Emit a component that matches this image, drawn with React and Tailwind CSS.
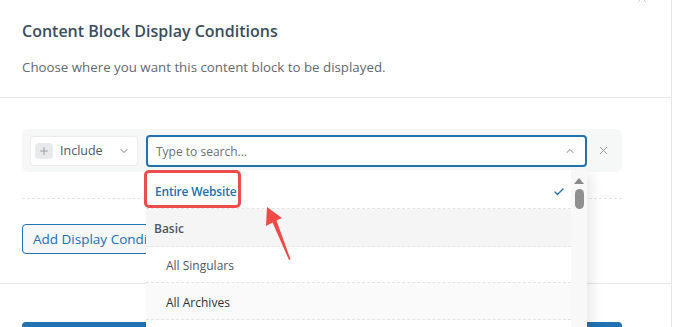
import { Plus, ChevronDown, ChevronUp, X, Check } from 'lucide-react';

function ConditionRow() {
  return (
    <div className="flex items-center w-[600px] h-[43px] bg-[#f6f7f7] rounded-md pl-2 pr-3">
      <div className="flex items-center w-[108px] h-[30px] bg-white border border-[#ececec] rounded px-[4px]">
        <span className="flex items-center justify-center w-[18px] h-[16px] bg-[#e8e9ea] rounded-sm">
          <Plus className="w-3 h-3 text-[#8a8f94]" strokeWidth={1.6} />
        </span>
        <span className="ml-[7px] pt-[2px] text-[12.5px] text-[#50575e]">Include</span>
        <ChevronDown className="ml-auto mr-[3px] w-3 h-3 text-[#6b7075]" strokeWidth={1.8} />
      </div>
      <div className="ml-2 flex items-center w-[441px] h-[32px] bg-white border-2 border-[#2271b1] rounded px-[8px]">
        <span className="pt-[2px] text-[12px] text-[#6b7075]">Type to search...</span>
        <ChevronUp className="ml-auto mr-[1px] w-3 h-3 text-[#6b7075]" strokeWidth={1.8} />
      </div>
      <X className="ml-auto w-[13px] h-[13px] text-[#8a8f94]" strokeWidth={1.6} />
    </div>
  );
}

function Dropdown() {
  const rowBase = 'flex items-center border-b border-dashed border-[#e2e4e7] text-[12px]';
  return (
    <div className="absolute left-[146px] top-[170px] w-[441px] h-[170px] bg-white flex shadow-[6px_4px_10px_rgba(0,0,0,0.08)]">
      <div className="flex-1 flex flex-col">
        <div className={`${rowBase} h-[39px] pt-[5px] bg-white pl-[9px] pr-[6px] font-semibold tracking-[-0.2px] text-[#2271b1]`}>
          <span>Entire Website</span>
          <Check className="ml-auto w-3 h-3 text-[#2271b1]" strokeWidth={2.6} />
        </div>
        <div className={`${rowBase} h-[38px] pt-[2px] bg-[#f5f5f5] pl-[8px] font-semibold text-[#50575e]`}>Basic</div>
        <div className={`${rowBase} h-[36px] pt-[3px] bg-white pl-[20px] text-[#50575e]`}>All Singulars</div>
        <div className={`${rowBase} h-[37px] pt-[3px] bg-[#fafafa] pl-[20px] text-[#2c3338]`}>All Archives</div>
        <div className="flex-1 bg-white" />
      </div>
      <div className="w-[16px] bg-[#f8f8f8] flex flex-col items-center pt-[8px]">
        <svg width="10" height="6" viewBox="0 0 10 6">
          <path d="M5 0 L10 6 L0 6 Z" fill="#8a8a8a" />
        </svg>
        <div className="mt-[5px] w-[9px] h-[20px] rounded-full bg-[#8f8f8f]" />
      </div>
    </div>
  );
}

function Annotation() {
  return (
    <>
      <div className="absolute left-[144px] top-[170px] w-[97px] h-[38px] border-[3px] border-[#ee4d4d] rounded-[5px]" />
      <svg className="absolute left-[255px] top-[200px]" width="45" height="65" viewBox="0 0 45 65">
        <path
          d="M12 7 L11 26 L17.5 22.5 L34 60 L35.5 59.3 L21.5 20.5 L27 18 Z"
          fill="#ef4a48"
        />
      </svg>
    </>
  );
}

export default function App() {
  return (
    <div
      className="relative w-[673px] h-[327px] overflow-hidden bg-white"
      style={{ fontFamily: '"Open Sans", "Noto Sans", sans-serif' }}
    >
      <div className="relative w-[672px] h-full border-r border-[#e6e6e6]">
        <X className="absolute left-[635px] top-[-9px] w-[14px] h-[14px] text-[#c4c4c4]" strokeWidth={1.6} />

        <div className="h-[98px] border-b border-[#e8e8e8] px-[22px] pt-[18px]">
          <h2 className="text-[16px] leading-[26px] font-semibold text-[#3b4d5e]">
            Content Block Display Conditions
          </h2>
          <p className="mt-[12px] text-[13.3px] leading-[22px] text-[#646970]">
            Choose where you want this content block to be displayed.
          </p>
        </div>

        <div className="h-[186px] border-b border-[#e8e8e8] px-[22px] pt-[31px]">
          <ConditionRow />
          <div className="mt-[26px] w-[600px] border-t border-dashed border-[#e2e4e7]" />
          <button className="mt-[25px] h-[30px] px-[10px] pt-[1px] bg-[#f6f7f7] border border-[#2271b1] rounded text-[13.5px] text-[#2271b1]">
            Add Display Condition
          </button>
        </div>

        <div className="px-[22px] pt-[38px]">
          <div className="w-[600px] h-[30px] bg-[#2271b1] rounded" />
        </div>

        <Dropdown />
        <Annotation />
      </div>
    </div>
  );
}
